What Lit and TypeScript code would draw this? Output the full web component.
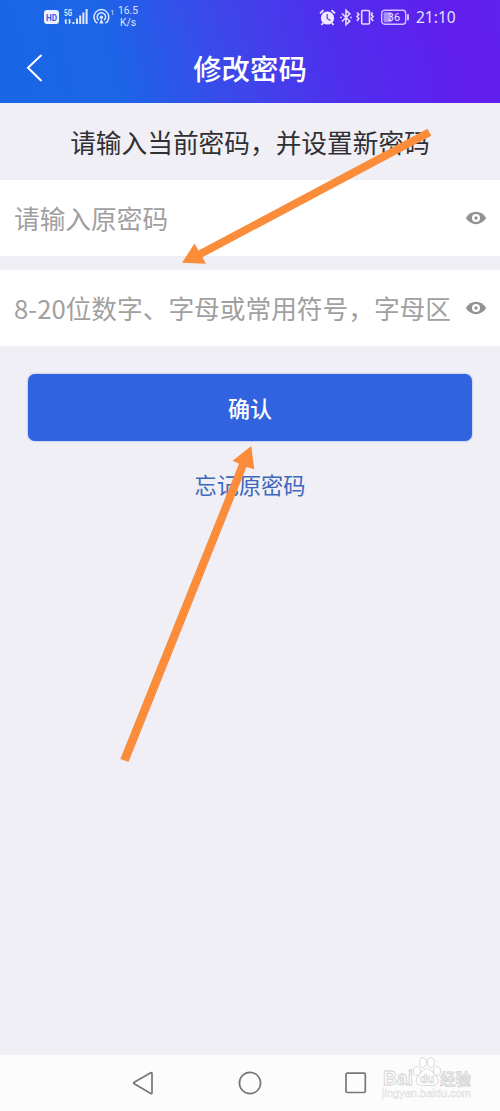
import { LitElement, html, css } from "lit";
import { customElement, property } from "lit/decorators.js";

@customElement("status-bar")
class StatusBar extends LitElement {
  static styles = css`
    :host { display: flex; justify-content: space-between; height: 36px; padding: 0 45px 0 44px; color: #dfe3ff; font-family: Roboto, sans-serif; }
    .group { display: flex; align-items: center; height: 34px; }
    svg { display: block; flex: none; overflow: visible; }
    .signal { margin-left: 5px; }
    .hotspot { margin-left: 5px; }
    .speed { font-size: 10.3px; line-height: 12px; text-align: center; margin-left: 4px; padding-bottom: 1px; width: 20px; white-space: nowrap; }
    .bt { margin-left: 4px; }
    .vibrate { margin-left: 4px; }
    .battery { margin-left: 6px; }
    .time { font: 15.5px/34px "Noto Sans", sans-serif; letter-spacing: 0; width: 39px; margin-left: 7px; white-space: nowrap; }
  `;
  render() {
    return html`
      <div class="group">
        <svg width="15" height="16" viewBox="0 0 15 16"><rect y="1" width="15" height="14" rx="3" fill="#edf0ff"/><text x="7.5" y="11.8" text-anchor="middle" textLength="11" lengthAdjust="spacingAndGlyphs" font-family="Roboto" font-weight="700" font-size="9.5" fill="#345de9">HD</text></svg>
        <svg class="signal" width="24" height="18" viewBox="0 0 24 18" fill="#e2e7ff"><text x="0" y="7.6" font-family="Roboto" font-weight="700" font-size="8.5" textLength="8" lengthAdjust="spacingAndGlyphs">5G</text><path d="M1.8 11 0 13.2h1V16h1.6v-5zM5.5 16l1.8-2.2h-1V11H4.7v5z"/><rect x="8.500" y="14" width="2" height="2"/><rect x="12" y="10.500" width="2" height="5.500"/><rect x="15.200" y="7.500" width="2" height="8.500"/><rect x="18.400" y="4.500" width="2" height="11.500"/><rect x="21.600" y="1" width="2" height="15"/></svg>
        <svg class="hotspot" width="21" height="18" viewBox="0 0 21 18" fill="none" stroke="#dfe5ff" stroke-width="1.5"><path d="M4.400 15.200a7.400 7.400 0 1 1 8 0M5.700 12.200a4.200 4.200 0 1 1 5.400 0"/><circle cx="8.400" cy="9.200" r="1.700" fill="#dfe5ff" stroke="none"/><path d="M8.400 10.500 6.300 15.600h4.200Z" fill="#dfe5ff" stroke="none"/><text x="17" y="6.500" font-family="Roboto" font-size="8" fill="#d5daff" stroke="none">1</text></svg>
        <div class="speed">16.5<br />K/s</div>
      </div>
      <div class="group">
        <svg width="17" height="17" viewBox="0 0 17 17"><circle cx="8.5" cy="9" r="6.6" fill="#f0e9ff"/><path d="M1 4.400 4.500 1.200M12.500 1.200 16 4.400M4 14l-1.500 2M13 14l1.500 2" stroke="#f0e9ff" stroke-width="1.8"/><path d="M8.200 5v4.400l3.300 2" fill="none" stroke="#6330ea" stroke-width="1.2"/></svg>
        <svg class="bt" width="12" height="17" viewBox="0 0 12 17" fill="none" stroke="#e5dcff" stroke-width="1.6"><path d="m2 4.500 7.800 7.700L6 15.700V1.300l3.800 3.500L2 12.500"/><path d="M.2 8.500h1.600M10.200 8.500h1.600"/></svg>
        <svg class="vibrate" width="19" height="17" viewBox="0 0 19 17" fill="none" stroke="#e5dcff" stroke-width="1.6"><rect x="5.700" y="1.500" width="7.800" height="13.500" rx="1"/><path d="m1 3.500 1.800 2L1 7.500l1.800 2-1.800 2.500M16.500 3.500l-1.200 2 1.800 2-1.800 2 1.800 2.500"/></svg>
        <svg class="battery" width="28" height="16" viewBox="0 0 28 16"><rect x=".7" y="1.200" width="24" height="14" rx="3" fill="none" stroke="#cfc2ff" stroke-width="1.4"/><rect x="2.600" y="3.200" width="7.800" height="10" rx="1" fill="#a98dfa"/><path d="M27 5.200v6" stroke="#e5dcff" stroke-width="1.7"/><text x="13" y="12" text-anchor="middle" font-family="Roboto" font-size="11" fill="#eee7ff">36</text></svg>
        <div class="time">21:10</div>
      </div>`;
  }
}

@customElement("password-field")
class PasswordField extends LitElement {
  @property() hint = "";
  static styles = css`
    :host { display: flex; align-items: center; justify-content: space-between; height: 76px; background: #fff; padding: 0 13px 0 14px; box-sizing: border-box; }
    .hint { font-size: 25.7px; line-height: 40px; color: #a0a0a0; white-space: nowrap; font-weight: 400; }
    svg { flex: none; display: block; }
  `;
  render() {
    return html`<span class="hint">${this.hint}</span>
      <svg width="22" height="14" viewBox="0 0 22 14"><path d="M.8 7C6-1.200 16-1.200 21.200 7 16 15.200 6 15.200.8 7Z" fill="#929292"/><circle cx="11" cy="7" r="4" fill="#fff"/><circle cx="11" cy="7" r="1.700" fill="#929292"/></svg>`;
  }
}

@customElement("app-root")
class AppRoot extends LitElement {
  static styles = css`
    :host { display: flex; flex-direction: column; position: relative; width: 500px; height: 1111px; overflow: hidden; background: #efeff5; font-family: "Noto Sans CJK SC", sans-serif; }
    .header { height: 103px; background: linear-gradient(75deg, #1967e5 0%, #1c65e7 23%, #3d47ea 46%, #502eee 66%, #611eed 90%, #6020ed 100%); }
    .bar { display: grid; grid-template-columns: 60px 1fr 60px; height: 64px; align-items: center; }
    .back { display: block; margin-left: 26px; }
    .title { color: #fff; font-size: 28.4px; font-weight: 500; text-align: center; line-height: 40px; }
    .prompt { height: 77px; line-height: 78px; text-align: center; font-size: 25.7px; color: #303034; white-space: nowrap; }
    .fields { display: flex; flex-direction: column; gap: 14px; }
    .confirm { margin: 28px 28px 0; height: 67px; flex: none; border: 0; border-radius: 7px; background: #3162df; box-shadow: 0 0 2px #7595e8; color: #fff; font: 500 22px/66px "Noto Sans CJK SC", sans-serif; padding: 0 0 1px; }
    .forgot { margin-top: 23px; line-height: 40px; text-align: center; font-size: 22.2px; color: #3d68bd; }
    .nav { margin-top: auto; height: 56px; flex: none; background: #fcfcfc; display: flex; align-items: center; padding-left: 132px; }
    .nav svg { display: block; flex: none; }
    .home { margin-left: 83px; }
    .recent { margin-left: 82px; }
    .mark { margin-left: 15px; }
    .arrows { position: absolute; inset: 0; pointer-events: none; }
  `;
  render() {
    return html`
      <div class="header">
        <status-bar></status-bar>
        <div class="bar">
          <svg class="back" width="18" height="30" viewBox="0 0 18 30"><path d="M15.500 2 2 14.800 15.500 28" fill="none" stroke="#fff" stroke-width="2"/></svg>
          <div class="title">修改密码</div>
        </div>
      </div>
      <div class="prompt">请输入当前密码，并设置新密码</div>
      <div class="fields">
        <password-field hint="请输入原密码"></password-field>
        <password-field hint="8-20位数字、字母或常用符号，字母区"></password-field>
      </div>
      <button class="confirm">确认</button>
      <div class="forgot">忘记原密码</div>
      <div class="nav">
        <svg width="22" height="24" viewBox="0 0 22 24"><path d="M18.800 1.800 2.200 11.200q-1 .8 0 1.600l16.600 9.600q1.200.5 1.200-.7V2.500q0-1.200-1.200-.7Z" fill="none" stroke="#777" stroke-width="1.7"/></svg>
        <svg class="home" width="26" height="24" viewBox="0 0 26 24"><circle cx="13" cy="12" r="10.600" fill="none" stroke="#777" stroke-width="1.700"/></svg>
        <svg class="recent" width="22" height="24" viewBox="0 0 22 24"><rect x="1" y="2.200" width="19.300" height="19.300" rx="1.200" fill="none" stroke="#777" stroke-width="1.700"/></svg>
        <svg class="mark" width="92" height="56" viewBox="0 0 92 56" fill="#fff" stroke="#d2d2d2" stroke-width=".9">
          <text x="1" y="30" font-family="Liberation Sans" font-weight="700" font-size="20" textLength="30" lengthAdjust="spacingAndGlyphs">Bai</text>
          <ellipse cx="35" cy="16" rx="3.500" ry="4.500"/><ellipse cx="41" cy="7.500" rx="3.400" ry="5"/><ellipse cx="49" cy="7.500" rx="3.400" ry="5"/><ellipse cx="55" cy="16" rx="3.500" ry="4.500"/>
          <path d="M45 14c4 0 5 3 8 6s4 5 2.500 8-5 2.500-10.500 2.500-9.500 0-10.500-3 .5-5 2.500-7.500 4-6 8-6Z"/>
          <text x="45" y="28" text-anchor="middle" font-family="Liberation Sans" font-weight="700" font-size="12" stroke-width=".7">du</text>
          <text x="58" y="29.500" font-family="Noto Sans CJK SC" font-weight="500" font-size="16" textLength="31" lengthAdjust="spacingAndGlyphs" stroke-width=".8">经验</text>
          <text x="0" y="42" font-family="Liberation Sans" font-size="10" textLength="89" lengthAdjust="spacingAndGlyphs" stroke-width=".5" stroke="#dedede">jingyan.baidu.com</text>
        </svg>
      </div>
      <svg class="arrows" width="500" height="1111" viewBox="0 0 500 1111" fill="#fb8d3a">
        <path d="M182 262.800 194.500 243.500 198.500 250.500 427.500 128.800 431.300 135.700 202.500 257.300 205.800 263.800Z"/>
        <path d="M251.300 446 232.500 460.800 239 463.800 120.300 759 128.500 762 246.500 467 254.300 469.300Z"/>
      </svg>`;
  }
}
